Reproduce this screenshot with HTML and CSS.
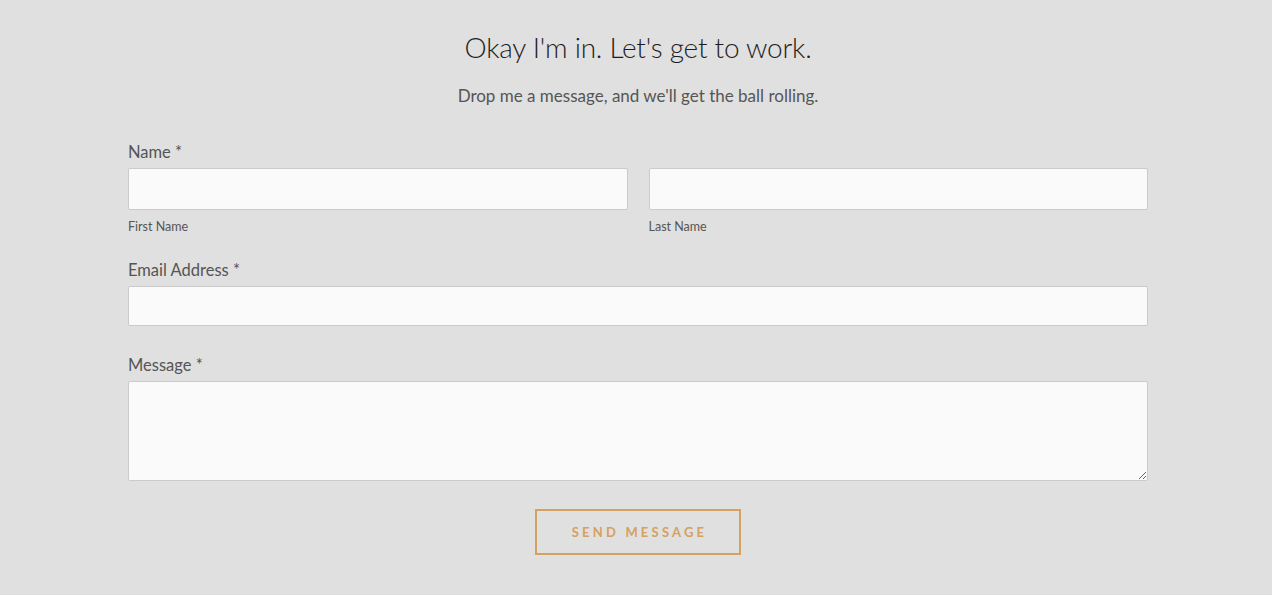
FILE: index.html
```html
<!DOCTYPE html>
<html>
<head>
<meta charset="utf-8">
<link rel="stylesheet" href="styles.css">
</head>
<body>
<main class="page">
  <h1 class="title">Okay I'm in. Let's get to work.</h1>
  <p class="subtitle">Drop me a message, and we'll get the ball rolling.</p>
  <form class="form">
    <div class="field">
      <div class="label">Name *</div>
      <div class="name-row">
        <div class="name-col">
          <input class="input input-name" type="text">
          <div class="sublabel">First Name</div>
        </div>
        <div class="name-col">
          <input class="input input-name" type="text">
          <div class="sublabel">Last Name</div>
        </div>
      </div>
    </div>
    <div class="field field-email">
      <div class="label">Email Address *</div>
      <input class="input input-email" type="text">
    </div>
    <div class="field field-message">
      <div class="label">Message *</div>
      <textarea class="input textarea"></textarea>
    </div>
    <div class="actions">
      <button type="button" class="button">SEND MESSAGE</button>
    </div>
  </form>
</main>
</body>
</html>
```
FILE: styles.css
```css
* { box-sizing: border-box; }
html, body { margin: 0; padding: 0; }
body {
  background: #e0e0e0;
  font-family: "Lato", "Noto Sans", sans-serif;
  color: #555;
}
.page {
  width: 1020px;
  margin-left: 128px;
  padding-top: 27px;
}
.title {
  margin: 0;
  text-align: center;
  font-weight: 300;
  font-size: 28px;
  letter-spacing: -0.25px;
  line-height: 40px;
  color: #1e1e1e;
}
.subtitle {
  margin: 18px 0 0;
  text-align: center;
  font-size: 17px;
  line-height: 22px;
  color: #555;
}
.form { margin-top: 34px; }
.label {
  font-size: 16.5px;
  line-height: 22px;
  color: #555;
  margin-bottom: 5px;
}
.name-row {
  display: flex;
  gap: 21px;
}
.name-col { flex: 1; }
.input {
  display: block;
  width: 100%;
  background: #fafafa;
  border: 1px solid #cbcbcb;
  border-radius: 2px;
  margin: 0;
  padding: 0;
  outline: none;
}
.input-name { height: 42px; }
.sublabel {
  font-size: 12.5px;
  line-height: 16px;
  margin-top: 9px;
  color: #555;
}
.field-email { margin-top: 24px; }
.input-email { height: 40px; }
.field-message { margin-top: 28px; }
.textarea {
  height: 100px;
  resize: vertical;
}
.actions {
  display: flex;
  justify-content: center;
  margin-top: 28px;
}
.button {
  width: 206px;
  height: 46px;
  background: transparent;
  border: 2px solid #d4a160;
  color: #d4a160;
  font-family: "Lato", "Noto Sans", sans-serif;
  font-weight: 700;
  font-size: 13px;
  letter-spacing: 3.2px;
  padding: 0 0 0 3px;
  cursor: pointer;
}
```
